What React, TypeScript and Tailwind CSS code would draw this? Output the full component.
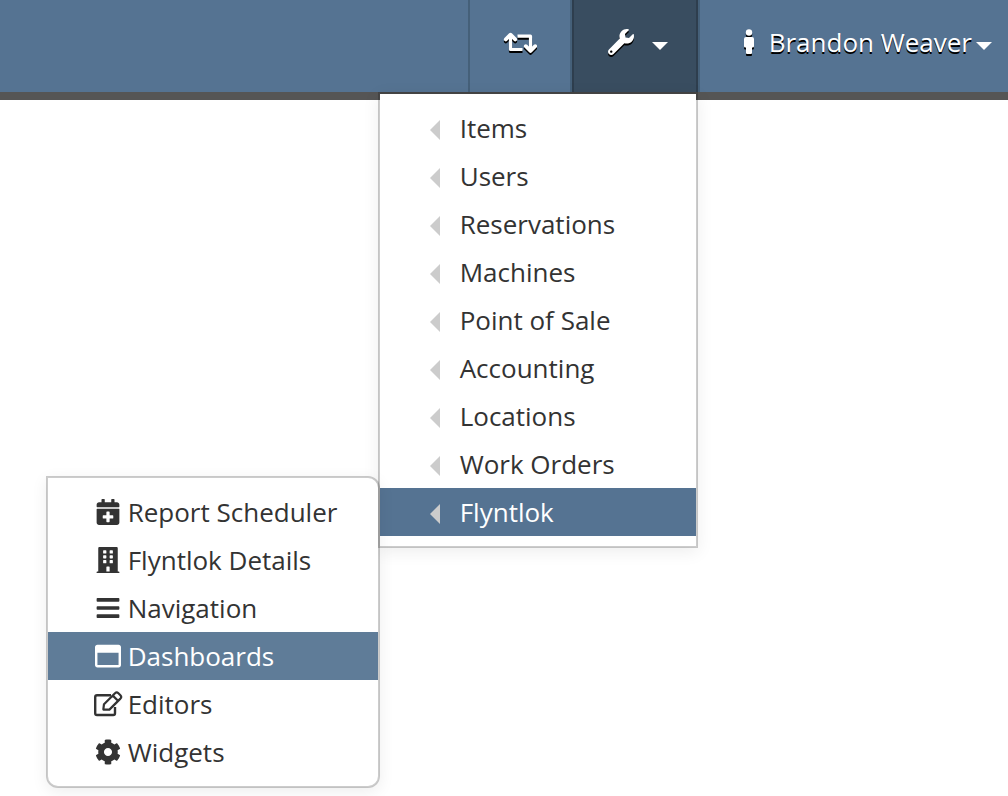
import { useState } from "react";
import type { ComponentType } from "react";
import {
  FaBars,
  FaBuilding,
  FaCalendarPlus,
  FaCog,
  FaRegWindowMaximize,
  FaWrench,
} from "react-icons/fa";

interface SubItem {
  label: string;
  icon: ComponentType<{ className?: string }>;
}

// Two bent arrows used for the switch button
const SwitchIcon = () => (
  <svg
    viewBox="0 0 34 22"
    className="h-[22px] w-[34px] drop-shadow-[0_2px_0_#000]"
    fill="none"
    stroke="currentColor"
    strokeWidth="3.2"
    strokeLinejoin="round"
    aria-hidden="true"
  >
    <path d="M7.5 4V17.5H19.5M14.5 4.2H27.5V17" />
    <path
      d="M2.8 7.4L7.5 2.7L12.2 7.4M22.8 14.2L27.5 18.9L32.2 14.2"
      strokeWidth="3.8"
      strokeLinecap="round"
    />
  </svg>
);

const PersonIcon = () => (
  <svg
    viewBox="0 0 10 26"
    className="mr-[15px] h-[26px] w-[10px] drop-shadow-[0_2px_0_#000]"
    fill="currentColor"
    aria-hidden="true"
  >
    <circle cx="5" cy="3.5" r="3.2" />
    <path d="M2 8h6a2 2 0 0 1 2 2v7.2a1.2 1.2 0 0 1-1.2 1.2H8V24a1 1 0 0 1-1 1H3a1 1 0 0 1-1-1v-5.600h-.8A1.200 1.200 0 0 1 0 17.200V10a2 2 0 0 1 2-2z" />
  </svg>
);

const EditIcon = () => (
  <svg
    viewBox="0 0 30 26"
    className="h-[26px] w-[30px] shrink-0"
    fill="none"
    stroke="currentColor"
    strokeWidth="2.4"
    strokeLinejoin="round"
    aria-hidden="true"
  >
    <path d="M18 4.2H4Q2.200 4.200 2.200 6V22.200Q2.200 24 4 24H20.200Q22 24 22 22.200V16" />
    <path
      d="M10.4 18.200L11 13.600L22 2.600Q23.700 1 25.400 2.600L27.400 4.600Q29 6.300 27.400 8L16.400 19H10.400ZM19.800 5L25 10.200"
      strokeWidth="2.2"
      transform="translate(0 -.4)"
    />
  </svg>
);

const menuItems = [
  "Items",
  "Users",
  "Reservations",
  "Machines",
  "Point of Sale",
  "Accounting",
  "Locations",
  "Work Orders",
  "Flyntlok",
];

const flyntlokItems: SubItem[] = [
  { label: "Report Scheduler", icon: FaCalendarPlus },
  { label: "Flyntlok Details", icon: FaBuilding },
  { label: "Navigation", icon: FaBars },
  { label: "Dashboards", icon: FaRegWindowMaximize },
  { label: "Editors", icon: EditIcon },
  { label: "Widgets", icon: FaCog },
];

const Caret = () => (
  <span className="mt-2 border-x-8 border-t-8 border-x-transparent border-t-white" />
);

// Third level, opens to the left of its parent row
const SubMenu = () => {
  const [active, setActive] = useState("Dashboards");

  return (
    <ul className="absolute right-full -top-3 w-[334px] rounded-xl rounded-tl-none border-2 border-black/20 bg-white bg-clip-padding py-[10px] shadow-[0_4px_16px_rgba(0,0,0,0.07)]">
      {flyntlokItems.map(({ label, icon: Icon }) => (
        <li key={label}>
          <a
            href="#"
            onMouseEnter={() => setActive(label)}
            className={`flex h-12 items-center gap-1 pl-11 ${
              active === label ? "bg-[#5f7c98] text-white" : "text-[#333]"
            }`}
          >
            <span className="flex w-8 justify-center">
              <Icon className="h-[26px] w-auto" />
            </span>
            {label}
          </a>
        </li>
      ))}
    </ul>
  );
};

const ToolsMenu = () => {
  const [active, setActive] = useState("Flyntlok");

  return (
    <ul className="absolute right-0 top-full z-10 w-80 border-2 border-black/20 bg-white bg-clip-padding py-[10px] shadow-[0_4px_16px_rgba(0,0,0,0.07)]">
      {menuItems.map((label) => (
        <li key={label} className="relative" onMouseEnter={() => setActive(label)}>
          <a
            href="#"
            className={`flex h-12 items-center gap-5 pl-[50px] ${
              active === label ? "bg-[#557392] text-white" : "text-[#333]"
            }`}
          >
            <span className="mt-1 border-y-10 border-r-10 border-y-transparent border-r-[#ccc]" />
            {label}
          </a>
          {label === "Flyntlok" && active === label && <SubMenu />}
        </li>
      ))}
    </ul>
  );
};

export default function App() {
  const [open, setOpen] = useState(true);

  return (
    <div className="min-h-screen bg-white font-['Open_Sans','Noto_Sans',sans-serif] text-[26px] leading-9">
      <header className="border-b-8 border-[#555] bg-[#557392] text-white">
        <nav className="flex h-[92px] justify-end">
          <button
            type="button"
            aria-label="Switch"
            className="flex w-[104px] items-center justify-center border-x-2 border-[#456079] pb-1.5"
          >
            <SwitchIcon />
          </button>

          <div className="relative">
            <button
              type="button"
              aria-label="Tools"
              aria-expanded={open}
              onClick={() => setOpen(!open)}
              className="flex h-full items-center gap-[18px] border-x-2 border-[#2e3e4e] bg-[#394d60] pb-2 pl-[34px] pr-7"
            >
              <FaWrench className="size-[26px] drop-shadow-[0_2px_0_#000]" />
              <Caret />
            </button>
            {open && <ToolsMenu />}
          </div>

          <button
            type="button"
            className="flex items-center border-l-2 border-[#456079] pb-2 pl-11 pr-4"
          >
            <PersonIcon />
            <span className="mr-1 text-shadow-[0_2px_0_#000]">Brandon Weaver</span>
            <Caret />
          </button>
        </nav>
      </header>
    </div>
  );
}
